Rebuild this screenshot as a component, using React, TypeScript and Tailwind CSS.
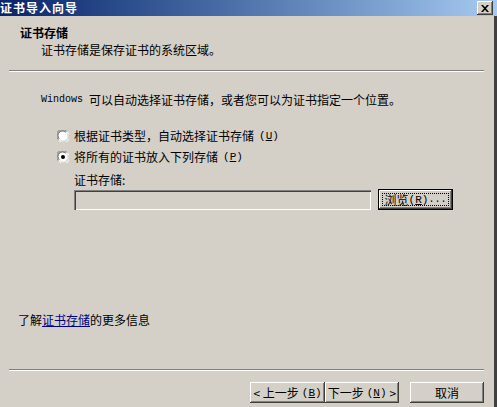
import React from "react";

const cjk = { fontFamily: '"Noto Sans CJK SC", "Noto Sans", sans-serif' };
const mono = { fontFamily: '"Liberation Mono", "DejaVu Sans Mono", monospace' };

function Radio({ checked }: { checked?: boolean }) {
  return (
    <svg width="12" height="12" viewBox="0 0 12 12" className="shrink-0">
      <circle cx="6" cy="6" r="5.5" fill="#ffffff" />
      <path d="M1.1 9.6 A5.5 5.5 0 0 1 9.6 1.1" fill="none" stroke="#808080" strokeWidth="1" />
      <path d="M2.2 8.8 A4.4 4.4 0 0 1 8.8 2.2" fill="none" stroke="#404040" strokeWidth="1" />
      <path d="M10.9 2.4 A5.5 5.5 0 0 1 2.4 10.9" fill="none" stroke="#ffffff" strokeWidth="1" />
      <path d="M9.8 3.2 A4.4 4.4 0 0 1 3.2 9.8" fill="none" stroke="#d4d0c8" strokeWidth="1" />
      {checked && <circle cx="6" cy="6" r="2" fill="#000000" />}
    </svg>
  );
}

function Key({ k }: { k: string }) {
  return (
    <span style={mono} className="text-[11px]">
      (<u>{k}</u>)
    </span>
  );
}

const raised =
  "shadow-[inset_-1px_-1px_0_#404040,inset_1px_1px_0_#ffffff,inset_-2px_-2px_0_#808080]";

function Button({ children, className = "" }: { children: React.ReactNode; className?: string }) {
  return (
    <div
      className={`h-[21px] flex items-center justify-center bg-[#d4d0c8] text-[12px] text-black ${raised} ${className}`}
    >
      {children}
    </div>
  );
}

function Separator() {
  return (
    <div className="mx-[9px] w-[475px] border-t border-t-[#808080] border-b border-b-white" />
  );
}

export default function App() {
  return (
    <div style={cjk} className="w-[497px] h-[407px] bg-[#d4d0c8] text-black text-[12px] leading-[16px] flex flex-col overflow-hidden">
      {/* title bar */}
      <div className="h-[16px] shrink-0 flex items-center bg-gradient-to-r from-[#0a246a] to-[#a6caf0] pr-[3px]">
        <span className="text-white font-bold text-[12px] leading-[14px] tracking-[1px]">证书导入向导</span>
        <div className="flex-1" />
        <div className={`w-[16px] h-[14px] bg-[#d4d0c8] flex items-center justify-center mr-[1px] ${raised}`}>
          <svg width="8" height="7" viewBox="0 0 8 7">
            <path d="M0 0h2l2 2.2L6 0h2L5 3.5 8 7H6L4 4.8 2 7H0l3-3.5z" fill="#000" />
          </svg>
        </div>
      </div>

      <div className="flex-1 flex border-r-[3px] border-r-[#404040]">
        <div className="flex-1 flex flex-col">
          {/* header */}
          <div className="pl-[20px] pt-[9px]">
            <div className="font-bold h-[16px]">证书存储</div>
            <div className="pl-[21px] mt-[1px] h-[16px]">证书存储是保存证书的系统区域。</div>
          </div>
          <div className="mt-[12px]">
            <Separator />
          </div>

          {/* body */}
          <div className="pl-[41px] mt-[20px] h-[16px] flex items-center">
            <span style={mono} className="text-[10px] mr-[6px]">Windows</span>
            <span>可以自动选择证书存储，或者您可以为证书指定一个位置。</span>
          </div>

          <div className="pl-[57px] mt-[20px] flex flex-col gap-[5px]">
            <div className="h-[16px] flex items-center gap-[5px]">
              <Radio />
              <span>根据证书类型，自动选择证书存储</span>
              <Key k="U" />
            </div>
            <div className="h-[16px] flex items-center gap-[5px]">
              <Radio checked />
              <span>将所有的证书放入下列存储</span>
              <Key k="P" />
            </div>
          </div>

          <div className="pl-[74px] mt-[7px]">
            <div className="h-[16px]">证书存储:</div>
            <div className="flex items-center gap-[7px] mt-[1px]">
              <div className="w-[297px] h-[20px] bg-[#d4d0c8] shadow-[inset_1px_1px_0_#808080,inset_2px_2px_0_#404040,inset_-1px_-1px_0_#ffffff,inset_-2px_-2px_0_#d4d0c8]" />
              <div className="w-[75px] h-[21px] border border-black">
                <Button className="w-full h-full">
                  <div className="border border-dotted border-black px-[2px] h-[13px] flex items-center leading-[12px]">
                    浏览<Key k="R" />
                    <span style={mono} className="text-[10px]">...</span>
                  </div>
                </Button>
              </div>
            </div>
          </div>

          <div className="pl-[18px] mt-[102px] h-[16px]">
            了解<span className="text-[#000080] underline">证书存储</span>的更多信息
          </div>

          <div className="mt-[41px]">
            <Separator />
          </div>

          <div className="flex pl-[250px] mt-[11px]">
            <Button className="w-[75px] gap-[3px]">
              <span>&lt; 上一步</span>
              <Key k="B" />
            </Button>
            <Button className="w-[74px] gap-[3px]">
              <span>下一步</span>
              <Key k="N" />
              <span>&gt;</span>
            </Button>
            <Button className="w-[74px] ml-[11px]">取消</Button>
          </div>
        </div>
      </div>
    </div>
  );
}
